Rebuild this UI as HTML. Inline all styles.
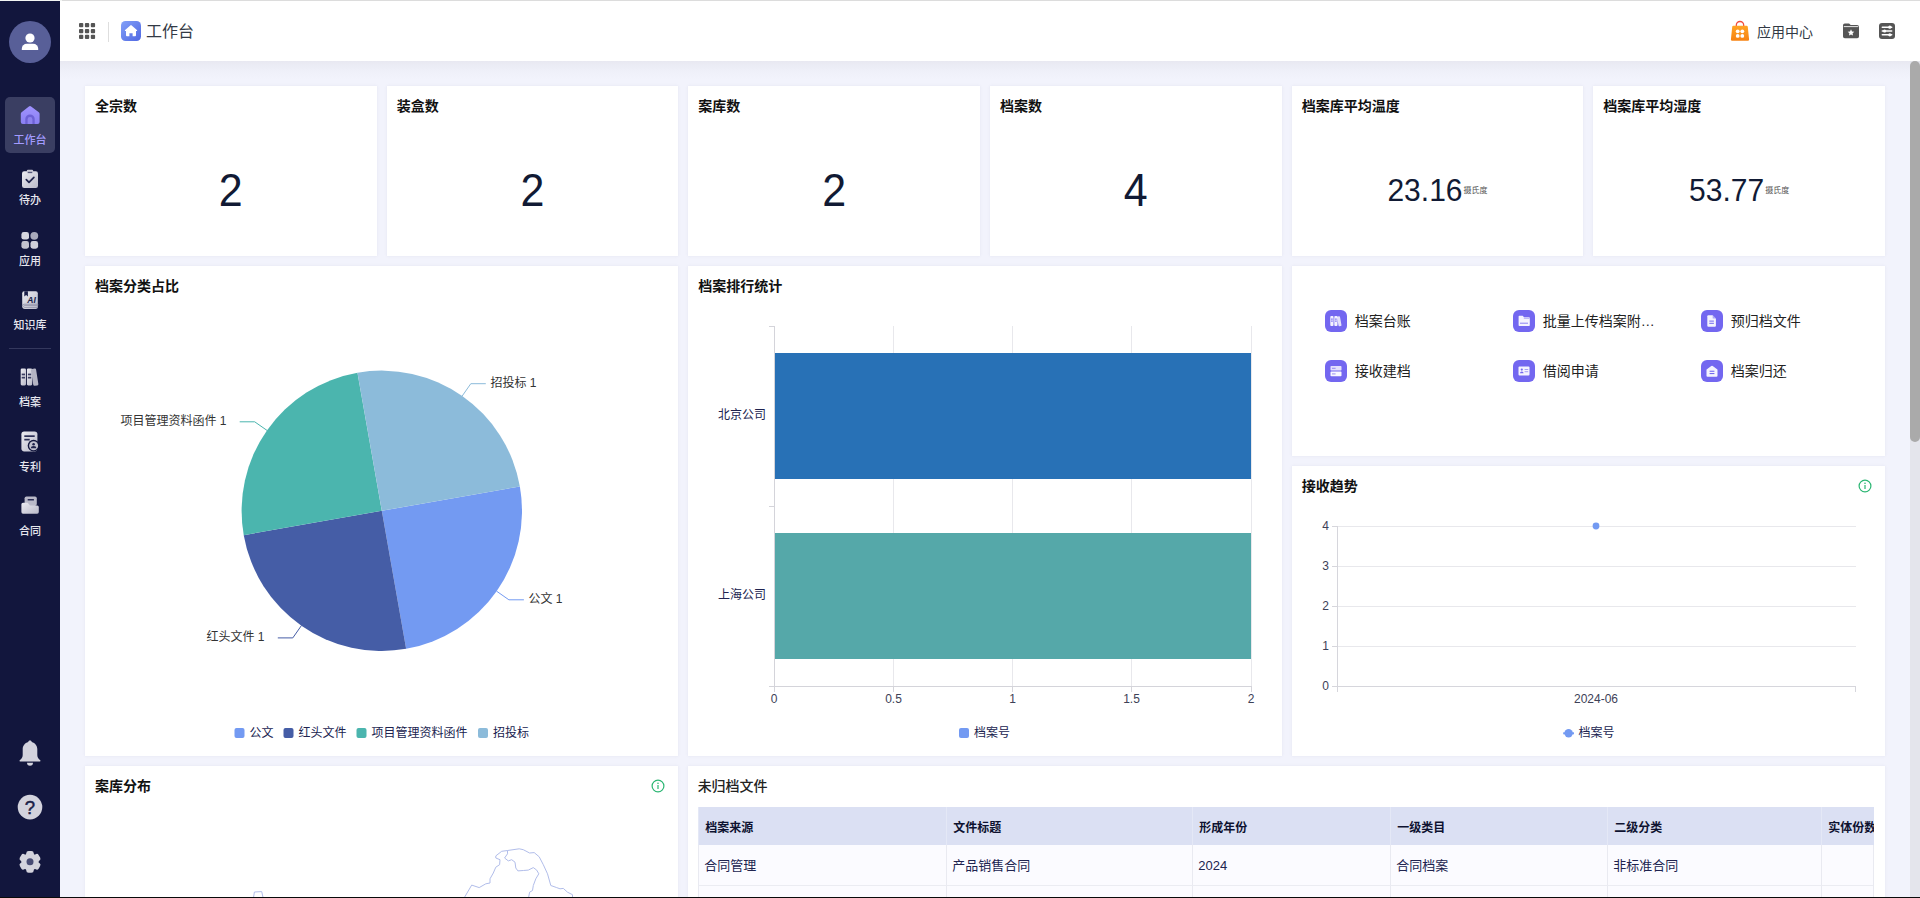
<!DOCTYPE html>
<html lang="zh-CN">
<head>
<meta charset="utf-8">
<title>工作台</title>
<style>
*{box-sizing:border-box;margin:0;padding:0}
html,body{width:1920px;height:898px;overflow:hidden;background:#f2f3fc;font-family:"Liberation Sans","Noto Sans CJK SC",sans-serif;color:#111;}
.abs{position:absolute}
#side{position:absolute;left:0;top:0;width:60px;height:898px;background:#12163d;z-index:20}
#head{position:absolute;left:60px;top:0;width:1860px;height:61px;background:#fff;border-top:1px solid #dcdcdc}
#main{position:absolute;left:60px;top:61px;width:1860px;height:837px;overflow:hidden}
.card{position:absolute;background:#fff;overflow:hidden;box-shadow:0 0 3px rgba(120,122,150,.10)}
.ttl{position:absolute;left:10px;top:10px;font-size:14px;line-height:20px;font-weight:700;color:#111;white-space:nowrap}
.num{position:absolute;left:0;right:0;text-align:center;color:#111a34;white-space:nowrap;transform:scaleY(1.06);transform-origin:50% 50%}
.unit{font-size:8px;color:#555;display:inline-block;vertical-align:middle;line-height:10px;position:relative;top:-1px;margin-left:1px;transform:scaleY(.943)}
.nav{position:absolute;left:0;width:60px;text-align:center;color:#e6e6ee;font-size:11px;line-height:14px;white-space:nowrap;font-weight:500}
.lk{position:absolute;font-size:14px;line-height:22px;color:#222;white-space:nowrap}
.tr{position:absolute;left:0;width:1183px}
.tr span{position:absolute;top:0;height:100%;padding-left:6px;white-space:nowrap;overflow:hidden;border-left:1px solid #e9eaf1;border-bottom:1px solid #ebecf2}
.th{background:#dbe0f3;font-size:12px;font-weight:700;color:#0e1230;line-height:42px}
.th span{border-left-color:#e4e8f6;border-bottom:none}
.td span{padding-left:5px}
.td{background:#fbfbff;font-size:13px;color:#20244f;line-height:42px}
#bottomline{position:absolute;left:0;top:896.700px;width:1920px;height:2px;background:#0a0a0a;z-index:50}
</style>
</head>
<body>
<!-- SIDEBAR -->
<div id="side">
  <div class="abs" style="left:5px;top:97px;width:50px;height:56px;border-radius:5px;background:#3a3e62"></div>
  <svg class="abs" style="left:0;top:0" width="60" height="898" viewBox="0 0 60 898">
    <defs>
      <linearGradient id="gI" x1="0" y1="0" x2="1" y2="1"><stop offset="0" stop-color="#ececf2"/><stop offset="1" stop-color="#b9b9c8"/></linearGradient>
      <linearGradient id="gP" x1="0" y1="0" x2="0" y2="1"><stop offset="0" stop-color="#a093ff"/><stop offset="1" stop-color="#8a80f2"/></linearGradient>
    </defs>
    <!-- avatar -->
    <circle cx="30" cy="42" r="21" fill="#585f98"/>
    <circle cx="30" cy="38" r="4.6" fill="#fff"/>
    <path d="M21.8 50v-1.2a5 5 0 0 1 5-5h6.4a5 5 0 0 1 5 5V50z" fill="#fff"/>
    <!-- home (active) -->
    <path d="M28.900 106.400a1.800 1.800 0 0 1 2.200 0l7.700 5.900a2 2 0 0 1 .8 1.600V122a2 2 0 0 1-2 2H22.800a2 2 0 0 1-2-2v-8.100a2 2 0 0 1 .8-1.600z" fill="url(#gP)"/>
    <path d="M25.300 124v-4.900a4.700 4.700 0 0 1 9.400 0V124z" fill="#6d61d6"/><path d="M27.600 124v-4.700a2.400 2.400 0 0 1 4.800 0V124z" fill="#8d82ee"/>
    <!-- todo clipboard -->
    <rect x="22" y="171.300" width="16" height="16.700" rx="2.200" fill="url(#gI)"/>
    <rect x="26.800" y="169.700" width="6.400" height="3.600" rx="1.200" fill="#c8c8d4"/>
    <rect x="27.800" y="171.800" width="4.400" height="1.300" fill="#55587a"/>
    <path d="M26.300 179.700l2.700 2.700 4.900-5.100" fill="none" stroke="#20244c" stroke-width="1.700" stroke-linecap="round" stroke-linejoin="round"/>
    <!-- apps -->
    <rect x="21.400" y="232" width="7.600" height="7.600" rx="2.400" fill="#d6d6df"/>
    <circle cx="34.300" cy="235.800" r="3.900" fill="#a9aabb"/>
    <rect x="21.400" y="241.100" width="7.600" height="7.600" rx="2.400" fill="#c4c4d0"/>
    <rect x="30.500" y="241.100" width="7.600" height="7.600" rx="2.400" fill="#d0d0da"/>
    <!-- knowledge AI book -->
    <path d="M24.200 291.200h11.600a2 2 0 0 1 2 2v13.700a2 2 0 0 1-2 2H24.800a2.600 2.600 0 0 1-2.600-2.600V293.200a2 2 0 0 1 2-2z" fill="url(#gI)"/>
    <path d="M24.300 291.200h3.600v5.200l-1.800-1.500-1.800 1.500z" fill="#1a1e48"/>
    <path d="M22.200 306a2 2 0 0 1 2-1.800h13.600v1.200H24.600a1 1 0 0 0 0 2h13.200" fill="none" stroke="#8e8fa6" stroke-width=".8"/>
    <text x="31.600" y="303" font-family="Liberation Sans,sans-serif" font-size="8.500" font-weight="700" font-style="italic" fill="#1a1e48" text-anchor="middle">AI</text>
    <!-- divider -->
    <rect x="9" y="348" width="42" height="1" fill="#34385d"/>
    <!-- archive books -->
    <rect x="20.700" y="368.400" width="5.300" height="17" rx="1.300" fill="url(#gI)"/>
    <rect x="26.900" y="368.400" width="5.300" height="17" rx="1.300" fill="url(#gI)"/>
    <rect x="21.700" y="373.600" width="3.300" height="1.700" fill="#3b3e63"/><rect x="21.700" y="376.800" width="3.300" height="1.700" fill="#3b3e63"/>
    <rect x="27.900" y="373.600" width="3.300" height="1.700" fill="#3b3e63"/><rect x="27.900" y="376.800" width="3.300" height="1.700" fill="#3b3e63"/>
    <rect x="33.400" y="368.600" width="5.200" height="17" rx="1.300" fill="#b4b4c4" transform="rotate(-9 36 385.600)"/>
    <!-- patent -->
    <rect x="21.400" y="431.400" width="16" height="20" rx="2.800" fill="url(#gI)"/>
    <rect x="24.300" y="435.300" width="10.400" height="1.700" fill="#2b2e55"/>
    <rect x="24.300" y="438.800" width="5.400" height="1.700" fill="#2b2e55"/>
    <circle cx="33.600" cy="445.700" r="5.900" fill="#12163d"/>
    <circle cx="33.600" cy="445.700" r="4.500" fill="#c2c2cf"/>
    <circle cx="33.600" cy="444.200" r="1.300" fill="#20244c"/>
    <path d="M30.900 448.200a2.700 2.200 0 0 1 5.400 0z" fill="#20244c"/>
    <!-- contract -->
    <rect x="24.600" y="496.400" width="12.200" height="9.500" rx="1.800" fill="#b9b9c8"/>
    <rect x="27.600" y="499" width="6.400" height="1.600" rx=".5" fill="#2b2e55"/>
    <path d="M21.400 504.300a1.600 1.600 0 0 1 1.600-1.600h4.700l2.300 2.800h7.200a1.600 1.600 0 0 1 1.600 1.600v5a1.600 1.600 0 0 1-1.600 1.600H23a1.600 1.600 0 0 1-1.600-1.600z" fill="url(#gI)"/>
    <!-- bell -->
    <path d="M30 740.400c1 0 1.700.7 1.800 1.600 3.300.9 5.500 3.800 5.500 7.300v5.700c0 1.900 1 3.700 2.700 4.900.9.700.5 1.700-.6 1.700H20.600c-1.100 0-1.500-1-.6-1.700 1.700-1.200 2.700-3 2.700-4.900v-5.700c0-3.500 2.200-6.400 5.500-7.300.1-.9.800-1.600 1.800-1.600z" fill="#d3d3dd"/>
    <path d="M27 762.800h6a3 3 0 0 1-6 0z" fill="#d3d3dd"/>
    <!-- help -->
    <circle cx="30" cy="807.100" r="12.300" fill="#d3d3dd"/>
    <text x="30" y="813.800" font-family="Liberation Sans,sans-serif" font-size="18.500" font-weight="400" fill="#1a1e48" stroke="#1a1e48" stroke-width=".45" text-anchor="middle">?</text>
    <!-- gear -->
    <g transform="translate(30 861.800)">
      <circle r="8.700" fill="#d3d3dd"/>
      <g fill="#d3d3dd">
        <rect x="-3.700" y="-10.900" width="7.400" height="7" rx="2.300"/>
        <rect x="-3.700" y="-10.900" width="7.400" height="7" rx="2.300" transform="rotate(60)"/>
        <rect x="-3.700" y="-10.900" width="7.400" height="7" rx="2.300" transform="rotate(120)"/>
        <rect x="-3.700" y="-10.900" width="7.400" height="7" rx="2.300" transform="rotate(180)"/>
        <rect x="-3.700" y="-10.900" width="7.400" height="7" rx="2.300" transform="rotate(240)"/>
        <rect x="-3.700" y="-10.900" width="7.400" height="7" rx="2.300" transform="rotate(300)"/>
      </g>
      <circle r="3.500" fill="#474b74"/>
    </g>
  </svg>
  <div class="nav" style="top:132.600px;color:#a39bff">工作台</div>
  <div class="nav" style="top:193px">待办</div>
  <div class="nav" style="top:254px">应用</div>
  <div class="nav" style="top:318px">知识库</div>
  <div class="nav" style="top:395px">档案</div>
  <div class="nav" style="top:459.500px">专利</div>
  <div class="nav" style="top:523.600px">合同</div>
</div>
<!-- HEADER -->
<div id="head">
  <svg class="abs" style="left:0;top:-1px" width="1860" height="61" viewBox="60 0 1860 61">
    <defs>
      <linearGradient id="gH" x1="0" y1="0" x2="1" y2="1"><stop offset="0" stop-color="#82a0f8"/><stop offset="1" stop-color="#5068e2"/></linearGradient>
      <linearGradient id="gB" x1="0" y1="0" x2="0" y2="1"><stop offset="0" stop-color="#ffa424"/><stop offset="1" stop-color="#f68212"/></linearGradient>
    </defs>
    <!-- grid -->
    <g fill="#555">
      <rect x="79" y="23" width="4.300" height="4.300" rx="1"/><rect x="84.900" y="23" width="4.300" height="4.300" rx="1"/><rect x="90.800" y="23" width="4.300" height="4.300" rx="1"/>
      <rect x="79" y="28.900" width="4.300" height="4.300" rx="1"/><rect x="84.900" y="28.900" width="4.300" height="4.300" rx="1"/><rect x="90.800" y="28.900" width="4.300" height="4.300" rx="1"/>
      <rect x="79" y="34.800" width="4.300" height="4.300" rx="1"/><rect x="84.900" y="34.800" width="4.300" height="4.300" rx="1"/><rect x="90.800" y="34.800" width="4.300" height="4.300" rx="1"/>
    </g>
    <rect x="108" y="22" width="1" height="20" fill="#dedede"/>
    <!-- home -->
    <rect x="121" y="21" width="20" height="20" rx="4.500" fill="url(#gH)"/>
    <path d="M130.300 25.400a1.100 1.100 0 0 1 1.400 0l5.200 4.500a.7.700 0 0 1-.4 1.200h-.5v4.200a.9.900 0 0 1-.9.900h-2.500v-3h-3.200v3h-2.500a.9.900 0 0 1-.9-.9v-4.200h-.5a.7.700 0 0 1-.4-1.200z" fill="#fff"/>
    <!-- bag -->
    <path d="M1736.300 27v-1.800a3.700 3.700 0 0 1 7.400 0V27" fill="none" stroke="#f24c3d" stroke-width="1.300"/>
    <path d="M1733.400 25.800h13.200a1.200 1.200 0 0 1 1.200 1.100l1.300 12.500a1.300 1.300 0 0 1-1.300 1.400h-15.600a1.300 1.300 0 0 1-1.300-1.400l1.300-12.500a1.200 1.200 0 0 1 1.200-1.100z" fill="url(#gB)"/>
    <g fill="#fff"><circle cx="1737.700" cy="31.300" r="1.900"/><circle cx="1742.300" cy="31.300" r="1.900"/><circle cx="1737.700" cy="35.900" r="1.900"/><circle cx="1742.300" cy="35.900" r="1.900"/></g>
    <!-- folder star -->
    <path d="M1843 25.200a1.800 1.800 0 0 1 1.800-1.800h4.300l1.600 1.700h6.500a1.800 1.800 0 0 1 1.800 1.800v9.500a1.800 1.800 0 0 1-1.800 1.800h-12.400a1.800 1.800 0 0 1-1.800-1.800z" fill="#555"/>
    <rect x="1843.800" y="26.100" width="14.400" height="1" fill="#fff" opacity=".85"/>
    <path d="M1851 29.300l1 2.100 2.300.3-1.700 1.600.4 2.300-2-1.100-2 1.100.4-2.300-1.700-1.600 2.300-.3z" fill="#fff"/>
    <!-- settings -->
    <rect x="1879" y="23" width="16" height="16" rx="3" fill="#555"/>
    <g stroke="#fff" stroke-width="1.500" stroke-linecap="round"><path d="M1882.300 27.200h9.400M1882.300 31h9.400M1882.300 34.800h9.400"/></g>
    <circle cx="1889.800" cy="27.200" r="1.600" fill="#fff"/><circle cx="1884.600" cy="31" r="1.600" fill="#fff"/><circle cx="1889.800" cy="34.800" r="1.600" fill="#fff"/>
  </svg>
  <div class="abs" style="left:86px;top:15.800px;font-size:16px;line-height:30px;color:#333a45">工作台</div>
  <div class="abs" style="left:1697px;top:16px;font-size:14px;line-height:30px;color:#333a45">应用中心</div>
</div>
<!-- MAIN -->
<div id="main">
  <div class="abs" style="left:0;top:0;width:1850px;height:18px;background:linear-gradient(#e8e8f1 0,#ebecf5 25%,#eff0f9 60%,#f2f3fc 100%)"></div>
  <!-- row 1 -->
  <div class="card" style="left:25.00px;top:25px;width:291.67px;height:170px"><div class="ttl">全宗数</div><div class="num" style="top:80px;font-size:43px;line-height:48px">2</div></div>
  <div class="card" style="left:326.67px;top:25px;width:291.67px;height:170px"><div class="ttl">装盒数</div><div class="num" style="top:80px;font-size:43px;line-height:48px">2</div></div>
  <div class="card" style="left:628.33px;top:25px;width:291.67px;height:170px"><div class="ttl">案库数</div><div class="num" style="top:80px;font-size:43px;line-height:48px">2</div></div>
  <div class="card" style="left:930.00px;top:25px;width:291.67px;height:170px"><div class="ttl">档案数</div><div class="num" style="top:80px;font-size:43px;line-height:48px">4</div></div>
  <div class="card" style="left:1231.67px;top:25px;width:291.67px;height:170px"><div class="ttl">档案库平均温度</div><div class="num" style="top:80px;font-size:30px;line-height:48px">23.16<span class="unit">摄氏度</span></div></div>
  <div class="card" style="left:1533.33px;top:25px;width:291.67px;height:170px"><div class="ttl">档案库平均湿度</div><div class="num" style="top:80px;font-size:30px;line-height:48px">53.77<span class="unit">摄氏度</span></div></div>
  <!-- row 2 -->
  <div class="card" id="pie" style="left:25.00px;top:205px;width:593.33px;height:490px"><div class="ttl">档案分类占比</div>
    <svg class="abs" style="left:1px;top:0" width="593" height="490" viewBox="86 266 593 490" font-family="Liberation Sans,Noto Sans CJK SC,sans-serif" font-size="12">
      <path d="M381.800 510.800L519.870 486.490A140.200 140.200 0 0 1 406.150 648.870Z" fill="#739af2"/>
      <path d="M381.800 510.800L406.150 648.870A140.200 140.200 0 0 1 243.730 535.150Z" fill="#455da6"/>
      <path d="M381.800 510.800L243.730 535.150A140.200 140.200 0 0 1 357.450 372.730Z" fill="#4bb5ae"/>
      <path d="M381.800 510.800L357.450 372.730A140.200 140.200 0 0 1 519.870 486.490Z" fill="#8cbbda"/>
      <g fill="none" stroke-width="1">
        <path d="M462.200 396L470.800 383.700H485.800" stroke="#8cbbda"/>
        <path d="M496.600 591.200L508.900 599.800H523.900" stroke="#739af2"/>
        <path d="M301.400 625.600L292.800 637.900H277.800" stroke="#455da6"/>
        <path d="M267 430.400L254.700 421.800H239.700" stroke="#4bb5ae"/>
      </g>
      <g fill="#333">
        <text x="490.500" y="387">招投标 1</text>
        <text x="528.500" y="603">公文 1</text>
        <text x="264.500" y="641.200" text-anchor="end">红头文件 1</text>
        <text x="226.500" y="425" text-anchor="end">项目管理资料函件 1</text>
      </g>
      <rect x="234.500" y="728" width="10" height="10" rx="2" fill="#739af2"/>
      <rect x="283.500" y="728" width="10" height="10" rx="2" fill="#455da6"/>
      <rect x="356.500" y="728" width="10" height="10" rx="2" fill="#4bb5ae"/>
      <rect x="478" y="728" width="10" height="10" rx="2" fill="#8cbbda"/>
      <g fill="#20234f">
        <text x="249.500" y="737.300">公文</text>
        <text x="298.500" y="737.300">红头文件</text>
        <text x="371.500" y="737.300">项目管理资料函件</text>
        <text x="493" y="737.300">招投标</text>
      </g>
    </svg>
  </div>
  <div class="card" id="bar" style="left:628.33px;top:205px;width:593.33px;height:490px"><div class="ttl">档案排行统计</div>
    <svg class="abs" style="left:0.67px;top:0" width="593" height="490" viewBox="689 266 593 490" font-family="Liberation Sans,Noto Sans CJK SC,sans-serif" font-size="12" shape-rendering="crispEdges">
      <g stroke="#e8e8ec" stroke-width="1"><path d="M893.500 326V686M1012.500 326V686M1131.500 326V686M1251.500 326V686"/></g>
      <rect x="774" y="353" width="477" height="126" fill="#2871b6"/>
      <rect x="774" y="533" width="477" height="126" fill="#55a8a9"/>
      <g stroke="#d4d4da" stroke-width="1">
        <path d="M774.500 326V686.500M769 326.500H774.500M769 506.500H774.500M769 686.500H1251.500"/>
        <path d="M774.500 686V692M893.500 686V692M1012.500 686V692M1131.500 686V692M1251.500 686V692"/>
      </g>
      <g fill="#3d4157" text-anchor="middle" shape-rendering="auto">
        <text x="774" y="703.300">0</text><text x="893.500" y="703.300">0.5</text><text x="1012.500" y="703.300">1</text><text x="1131.500" y="703.300">1.5</text><text x="1251" y="703.300">2</text>
      </g>
      <g fill="#20234f" text-anchor="end" shape-rendering="auto">
        <text x="766" y="419.200">北京公司</text><text x="766" y="599.200">上海公司</text>
      </g>
      <rect x="959" y="728" width="10" height="10" rx="2" fill="#739af2" shape-rendering="auto"/>
      <text x="974" y="737.300" fill="#20234f" shape-rendering="auto">档案号</text>
    </svg>
  </div>
  <div class="card" id="links" style="left:1231.67px;top:205px;width:593.33px;height:190px">
    <svg class="abs" style="left:0.33px;top:0" width="593" height="190" viewBox="1292 266 593 190">
      <g fill="#7367f0">
        <rect x="1325" y="310" width="22" height="22" rx="6"/><rect x="1513" y="310" width="22" height="22" rx="6"/><rect x="1701" y="310" width="22" height="22" rx="6"/>
        <rect x="1325" y="360" width="22" height="22" rx="6"/><rect x="1513" y="360" width="22" height="22" rx="6"/><rect x="1701" y="360" width="22" height="22" rx="6"/>
      </g>
      <!-- 1 books -->
      <g fill="#fff">
        <rect x="1330.300" y="316" width="3.200" height="10" rx=".9" opacity=".92"/>
        <rect x="1334.300" y="316" width="3.200" height="10" rx=".9" opacity=".92"/>
        <rect x="1338.600" y="316.200" width="3" height="10" rx=".9" opacity=".8" transform="rotate(-10 1340 326)"/>
      </g>
      <g fill="#7367f0"><rect x="1331" y="318.600" width="1.800" height="1"/><rect x="1331" y="320.600" width="1.800" height="1"/><rect x="1335" y="318.600" width="1.800" height="1"/><rect x="1335" y="320.600" width="1.800" height="1"/></g>
      <!-- 2 folder -->
      <path d="M1518.600 316.600a.8.800 0 0 1 .8-.8h3.300l1.300 1.500h5a.8.800 0 0 1 .8.800v7.200a.8.800 0 0 1-.8.800h-9.600a.8.800 0 0 1-.8-.8z" fill="#fff" opacity=".92"/>
      <rect x="1520" y="322.700" width="8" height="1" fill="#7367f0" opacity=".8"/>
      <rect x="1523.800" y="317.800" width="5.600" height="1.100" fill="#7367f0" opacity=".45"/>
      <!-- 3 file -->
      <path d="M1707.300 316.300a1 1 0 0 1 1-1h4.400l3.200 3.200v7.200a1 1 0 0 1-1 1h-6.600a1 1 0 0 1-1-1z" fill="#fff" opacity=".92"/>
      <path d="M1712.700 315.300v3.200h3.200z" fill="#7367f0" opacity=".55"/>
      <rect x="1709.300" y="320.600" width="4.600" height="1" fill="#7367f0"/><rect x="1709.300" y="322.800" width="4.600" height="1" fill="#7367f0"/>
      <!-- 4 drawers -->
      <rect x="1330.500" y="366" width="11" height="4.600" rx=".8" fill="#fff" opacity=".8"/>
      <rect x="1330.500" y="371.600" width="11" height="4.600" rx=".8" fill="#fff" opacity=".95"/>
      <rect x="1332" y="367.800" width="3.600" height="1" fill="#7367f0" opacity=".7"/><rect x="1332" y="373.400" width="3.600" height="1" fill="#7367f0" opacity=".7"/>
      <!-- 5 id card -->
      <rect x="1518.500" y="366.500" width="11" height="9" rx="1" fill="#fff" opacity=".92"/>
      <circle cx="1521.800" cy="369.600" r="1.100" fill="#7367f0"/><path d="M1520 373.200a1.800 1.600 0 0 1 3.600 0z" fill="#7367f0"/>
      <rect x="1524.600" y="369" width="3.600" height="1" fill="#7367f0" opacity=".6"/><rect x="1524.600" y="371.200" width="3.600" height="1" fill="#7367f0" opacity=".6"/>
      <!-- 6 house box -->
      <path d="M1711.300 366a1 1 0 0 1 1.400 0l4.400 3.300a1 1 0 0 1 .4.800v5.700a1 1 0 0 1-1 1h-9a1 1 0 0 1-1-1v-5.700a1 1 0 0 1 .4-.8z" fill="#fff" opacity=".92"/>
      <rect x="1709.600" y="370.700" width="4.800" height="1.100" fill="#7367f0"/><rect x="1709.600" y="373" width="4.800" height="1.100" fill="#7367f0"/>
    </svg>
    <div class="lk" style="left:63px;top:44px">档案台账</div>
    <div class="lk" style="left:251px;top:44px">批量上传档案附…</div>
    <div class="lk" style="left:439px;top:44px">预归档文件</div>
    <div class="lk" style="left:63px;top:94px">接收建档</div>
    <div class="lk" style="left:251px;top:94px">借阅申请</div>
    <div class="lk" style="left:439px;top:94px">档案归还</div>
  </div>
  <div class="card" id="trend" style="left:1231.67px;top:405px;width:593.33px;height:290px"><div class="ttl">接收趋势</div>
    <svg class="abs" style="left:0.33px;top:0" width="593" height="290" viewBox="1292 466 593 290" font-family="Liberation Sans,Noto Sans CJK SC,sans-serif" font-size="12">
      <g stroke="#e8e8ec" stroke-width="1" shape-rendering="crispEdges"><path d="M1337 526.500H1855.500M1337 566.500H1855.500M1337 606.500H1855.500M1337 646.500H1855.500"/></g>
      <g stroke="#d6d6dc" stroke-width="1" shape-rendering="crispEdges">
        <path d="M1337.500 526V686.500M1332 686.500H1855.500M1332 526.500H1337M1332 566.500H1337M1332 606.500H1337M1332 646.500H1337M1337.500 686V692M1855.500 686V692"/>
      </g>
      <g fill="#3d4157" text-anchor="end">
        <text x="1329" y="530.300">4</text><text x="1329" y="570.300">3</text><text x="1329" y="610.300">2</text><text x="1329" y="650.300">1</text><text x="1329" y="690.300">0</text>
      </g>
      <text x="1596" y="703.300" fill="#3d4157" text-anchor="middle">2024-06</text>
      <circle cx="1596" cy="526" r="3.400" fill="#739af2"/>
      <rect x="1563.200" y="732.300" width="10.800" height="2" fill="#739af2"/>
      <circle cx="1568.600" cy="733.300" r="4.200" fill="#739af2"/>
      <text x="1578.500" y="737.300" fill="#20234f">档案号</text>
      <circle cx="1865" cy="486" r="5.900" fill="none" stroke="#2bb673" stroke-width="1.200"/>
      <rect x="1864.400" y="485" width="1.200" height="4" fill="#2bb673"/><circle cx="1865" cy="483.200" r=".8" fill="#2bb673"/>
    </svg>
  </div>
  <!-- row 3 -->
  <div class="card" id="map" style="left:25.00px;top:705px;width:593.33px;height:200px"><div class="ttl">案库分布</div>
    <svg class="abs" style="left:1px;top:0" width="593" height="200" viewBox="86 766 593 200" fill="none" stroke="#b1bdea" stroke-width="1" stroke-linejoin="round">
      <path d="M463.500 899L471.700 885.100 479.200 887.600 485.800 883.800 490 883 490 878.800 493.300 873 495.800 867.200 499.600 864.700 500 859.700 495.800 858 495.800 855.900 501.700 851.300 507.500 850.500 519.200 848.800 523.300 849.700 529.600 853 534.200 852.600 539.200 856.800 543.300 864.700 547.500 873.800 550.800 885.500 556.700 887.600 560 888.800 563.300 888.400 567.500 892.200 572.500 894.700 572.500 899"/>
      <path d="M507.500 850.500L507.500 853.800 504.600 858 508.300 860.900 511.700 859.700 515 862.200 515.800 868 517.900 870.900 523.300 870.500 528.300 870.100 533.300 867.600 536.700 870.100 538.800 873.800 535.800 878.800 533.300 885.500 532.500 890.500 529.600 892.200 528.300 899"/>
      <path d="M253.300 899L254.400 892 261.700 891.600 263.400 899"/>
      <circle cx="658" cy="786" r="5.900" stroke="#2bb673" stroke-width="1.200"/>
      <rect x="657.400" y="785" width="1.200" height="4" fill="#2bb673" stroke="none"/><circle cx="658" cy="783.200" r=".8" fill="#2bb673" stroke="none"/>
    </svg>
  </div>
  <div class="card" id="tbl" style="left:628.33px;top:705px;width:1196.67px;height:200px"><div class="ttl" style="left:9.300px;font-weight:500;color:#222">未归档文件</div>
    <div class="abs" id="tb" style="left:10px;top:41px;width:1175.670px;height:160px;overflow:hidden">
      <div class="tr th" style="top:0;height:38px"><span style="left:0;width:248px">档案来源</span><span style="left:248px;width:246px">文件标题</span><span style="left:494px;width:198px">形成年份</span><span style="left:692px;width:217px">一级类目</span><span style="left:909px;width:214px">二级分类</span><span style="left:1123px;width:60px">实体份数</span></div>
      <div class="tr td" style="top:38px;height:41px"><span style="left:0;width:248px">合同管理</span><span style="left:248px;width:246px">产品销售合同</span><span style="left:494px;width:198px">2024</span><span style="left:692px;width:217px">合同档案</span><span style="left:909px;width:214px">非标准合同</span><span style="left:1123px;width:60px"></span></div>
      <div class="abs" style="left:1174.670px;top:38px;width:1px;height:130px;background:#e9eaf1;z-index:3"></div>
      <div class="tr td" style="top:79px;height:41px"><span style="left:0;width:248px"></span><span style="left:248px;width:246px"></span><span style="left:494px;width:198px"></span><span style="left:692px;width:217px"></span><span style="left:909px;width:214px"></span><span style="left:1123px;width:60px"></span></div>
    </div>
  </div>
  <!-- scrollbar -->
  <div class="abs" style="left:1850px;top:0;width:10px;height:837px;background:#e4e5ec"></div>
  <div class="abs" style="left:1850px;top:0;width:10px;height:381px;background:#aaa;border-radius:5px"></div>
</div>
<div class="abs" style="left:0;top:0;width:62px;height:1px;background:#f3f6f4;z-index:60"></div>
<div id="bottomline"></div>
</body>
</html>
